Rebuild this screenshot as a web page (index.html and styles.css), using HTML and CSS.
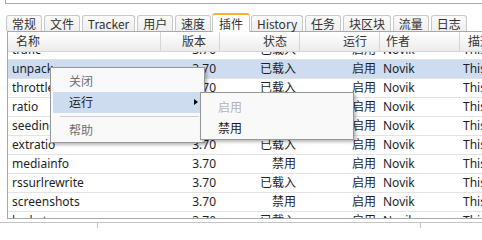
FILE: index.html
```html
<!DOCTYPE html>
<html>
<head>
<meta charset="utf-8">
<link rel="stylesheet" href="styles.css">
</head>
<body>
<div class="topbox"></div>
<div class="tabs">
  <div class="tab">常规</div>
  <div class="tab">文件</div>
  <div class="tab">Tracker</div>
  <div class="tab">用户</div>
  <div class="tab">速度</div>
  <div class="tab active">插件</div>
  <div class="tab">History</div>
  <div class="tab">任务</div>
  <div class="tab">块区块</div>
  <div class="tab">流量</div>
  <div class="tab">日志</div>
</div>
<div class="pane">
  <div class="header">
    <div class="hc c-name">名称</div>
    <div class="hc c-ver hr">版本</div>
    <div class="hc c-st hr">状态</div>
    <div class="hc c-run hr">运行</div>
    <div class="hc c-auth">作者</div>
    <div class="hc c-desc">描述</div>
  </div>
  <div class="body">
    <div class="rows">
      <div class="row"><div class="c c-name">trafic</div><div class="c c-ver r">3.70</div><div class="c c-st r">已载入</div><div class="c c-run r">启用</div><div class="c c-auth">Novik</div><div class="c c-desc">This plugin allows to monitor traffic</div></div>
      <div class="row sel"><div class="c c-name">unpack</div><div class="c c-ver r">3.70</div><div class="c c-st r">已载入</div><div class="c c-run r">启用</div><div class="c c-auth">Novik</div><div class="c c-desc">This plugin is designed to unpack</div></div>
      <div class="row"><div class="c c-name">throttle</div><div class="c c-ver r">3.70</div><div class="c c-st r">已载入</div><div class="c c-run r">启用</div><div class="c c-auth">Novik</div><div class="c c-desc">This plugin allows to throttle</div></div>
      <div class="row"><div class="c c-name">ratio</div><div class="c c-ver r">3.70</div><div class="c c-st r">已载入</div><div class="c c-run r">启用</div><div class="c c-auth">Novik</div><div class="c c-desc">This plugin allows to set ratio</div></div>
      <div class="row"><div class="c c-name">seedingtime</div><div class="c c-ver r">3.70</div><div class="c c-st r">已载入</div><div class="c c-run r">启用</div><div class="c c-auth">Novik</div><div class="c c-desc">This plugin adds seeding time</div></div>
      <div class="row"><div class="c c-name">extratio</div><div class="c c-ver r">3.70</div><div class="c c-st r">已载入</div><div class="c c-run r">启用</div><div class="c c-auth">Novik</div><div class="c c-desc">This plugin extends ratio</div></div>
      <div class="row"><div class="c c-name">mediainfo</div><div class="c c-ver r">3.70</div><div class="c c-st r">禁用</div><div class="c c-run r">启用</div><div class="c c-auth">Novik</div><div class="c c-desc">This plugin shows media info</div></div>
      <div class="row"><div class="c c-name">rssurlrewrite</div><div class="c c-ver r">3.70</div><div class="c c-st r">已载入</div><div class="c c-run r">启用</div><div class="c c-auth">Novik</div><div class="c c-desc">This plugin extends RSS</div></div>
      <div class="row"><div class="c c-name">screenshots</div><div class="c c-ver r">3.70</div><div class="c c-st r">禁用</div><div class="c c-run r">启用</div><div class="c c-auth">Novik</div><div class="c c-desc">This plugin shows screenshots</div></div>
      <div class="row"><div class="c c-name">lookat</div><div class="c c-ver r">3.70</div><div class="c c-st r">已载入</div><div class="c c-run r">启用</div><div class="c c-auth">Novik</div><div class="c c-desc">This plugin allows to lookat</div></div>
    </div>
  </div>
</div>
<div class="statusbar">
  <div class="sb sb1"></div>
  <div class="sb sb2"></div>
  <div class="sb sb3"></div>
</div>

<div class="menu main-menu">
  <div class="mi dim">关闭</div>
  <div class="mi hover">运行<span class="arrow"></span></div>
  <div class="msep"></div>
  <div class="mi dim">帮助</div>
</div>
<div class="menu sub-menu">
  <div class="mi disabled">启用</div>
  <div class="mi">禁用</div>
</div>
</body>
</html>
```
FILE: styles.css
```css
html, body {
  margin: 0;
  padding: 0;
}
body {
  width: 482px;
  height: 228px;
  overflow: hidden;
  position: relative;
  background: #ffffff;
  font-family: "Noto Sans", "Noto Sans CJK SC", sans-serif;
  font-size: 12px;
  color: #222;
}
.topbox {
  margin-left: 5px;
  height: 3px;
  border-left: 1px solid #a9a9a9;
  border-bottom: 1px solid #a9a9a9;
}
.tabs {
  display: flex;
  align-items: flex-end;
  margin-top: 9px;
  padding-left: 6px;
  height: 18px;
  white-space: nowrap;
  font-family: "Noto Sans CJK SC", "Noto Sans", sans-serif;
}
.tab {
  box-sizing: border-box;
  height: 16px;
  padding: 0 5px;
  margin-right: 1.9px;
  border: 1px solid #c9c9c9;
  border-bottom: none;
  border-radius: 3px 3px 0 0;
  background: linear-gradient(#fbfbfb, #eeeeee);
  color: #333;
  line-height: 15px;
  display: flex;
  align-items: center;
}
.tab.active {
  margin-left: -1px;
  margin-right: 0.9px;
  padding: 0 6px;
  background: #ffffff;
  border-color: #c9c9c9;
  border-top: 2px solid #f2b33d;
  position: relative;
  z-index: 1;
  margin-bottom: -1px;
  height: 19px;
}
.pane {
  margin-left: 7px;
  width: 600px;
  height: 186px;
  border-left: 1px solid #a9a9a9;
  border-top: 1px solid #a9a9a9;
  border-bottom: 1px solid #a9a9a9;
}
.header {
  display: flex;
  height: 19px;
  border-bottom: 1px solid #d6d6d6;
  background: linear-gradient(#ffffff, #ececec);
}
.hc {
  box-sizing: border-box;
  flex: none;
  border-right: 1px solid #d6d6d6;
  display: flex;
  align-items: center;
  color: #333;
  line-height: 14px;
}
.c-name { width: 153px; }
.c-ver { width: 59px; }
.c-st { width: 80px; }
.c-run { width: 80px; }
.c-auth { width: 80px; }
.c-desc { width: 148px; }
.hc.c-name { padding-left: 8px; }
.hc.hr { justify-content: flex-end; padding-right: 12px; }
.hc.c-ver { padding-right: 13px; }
.hc.c-auth { padding-left: 6px; }
.hc.c-desc { padding-left: 8px; border-right: none; }
.body {
  height: 166px;
  overflow: hidden;
}
.rows {
  margin-top: -11px;
}
.row {
  display: flex;
  height: 18px;
  border-bottom: 1px solid #e3e3e3;
  background: #fff;
}
.row.sel {
  background: #cddcee;
}
.c {
  box-sizing: border-box;
  flex: none;
  display: flex;
  align-items: center;
  white-space: nowrap;
  overflow: hidden;
  line-height: 14px;
  color: #1e1e28;
}
.c.r { justify-content: flex-end; padding-right: 4px; }
.c.c-name { padding-left: 4px; }
.c.c-auth { padding-left: 3px; }
.c.c-desc { padding-left: 3px; }
.statusbar {
  display: flex;
  margin-top: 3px;
  height: 6px;
  border-top: 1px solid #c4c4c4;
}
.sb {
  box-sizing: border-box;
  flex: none;
  border-right: 1px solid #c4c4c4;
}
.sb1 { width: 98px; }
.sb2 { width: 323px; }
.sb3 { flex: 1; border-right: none; }

.menu {
  position: absolute;
  box-sizing: border-box;
  background: #f9f9f9;
  border: 1px solid #979797;
  box-shadow: 2px 2px 3px rgba(0, 0, 0, 0.28);
}
.main-menu {
  left: 50px;
  top: 67px;
  width: 155px;
  padding: 3px 2px 1px 2px;
  z-index: 5;
}
.sub-menu {
  left: 200px;
  top: 92px;
  width: 154px;
  padding: 4px 2px 0 2px;
  z-index: 6;
}
.mi {
  position: relative;
  height: 21px;
  display: flex;
  align-items: center;
  padding-left: 16px;
  line-height: 14px;
  color: #1a1a1a;
}
.sub-menu .mi { padding-left: 15px; }
.mi.dim { color: #6f6f6f; }
.mi.disabled { color: #b4b4b4; }
.mi.hover { background: #cddcef; }
.arrow {
  position: absolute;
  right: 4px;
  top: 7px;
  width: 0;
  height: 0;
  border-left: 4px solid #000;
  border-top: 3.5px solid transparent;
  border-bottom: 3.5px solid transparent;
}
.msep {
  height: 1px;
  margin: 3px 3px 3px 7px;
  background: #cfcfcf;
}
```
